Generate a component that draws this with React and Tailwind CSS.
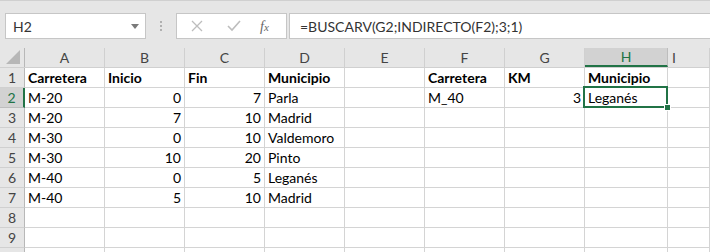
import React from "react";

const cols = ["A", "B", "C", "D", "E", "F", "G", "H", "I"];
const widths = ["w-[80px]", "w-[80px]", "w-[80px]", "w-[80px]", "w-[80px]", "w-[80px]", "w-[80px]", "w-[83px]", "flex-1"];

const data = [
    [{ t: "Carretera", b: true }, { t: "Inicio", b: true }, { t: "Fin", b: true }, { t: "Municipio", b: true }, null, { t: "Carretera", b: true }, { t: "KM", b: true }, { t: "Municipio", b: true }, null],
    [{ t: "M-20" }, { t: "0", r: true }, { t: "7", r: true }, { t: "Parla" }, null, { t: "M_40" }, { t: "3", r: true }, { t: "Leganés", sel: true }, null],
    [{ t: "M-20" }, { t: "7", r: true }, { t: "10", r: true }, { t: "Madrid" }],
    [{ t: "M-30" }, { t: "0", r: true }, { t: "10", r: true }, { t: "Valdemoro" }],
    [{ t: "M-30" }, { t: "10", r: true }, { t: "20", r: true }, { t: "Pinto" }],
    [{ t: "M-40" }, { t: "0", r: true }, { t: "5", r: true }, { t: "Leganés" }],
    [{ t: "M-40" }, { t: "5", r: true }, { t: "10", r: true }, { t: "Madrid" }],
    [],
    [],
    [],
];

function FormulaBar() {
    return (
        <div className="h-[48px] bg-[#e6e6e6] border-t border-[#d0d0d0] flex items-start pt-[12px]">
            <div className="ml-[5px] w-[141px] h-[26px] bg-white border border-[#c6c6c6] flex items-center justify-between pl-[7px] pr-[6px] text-[14px] text-[#333]">
                <span>H2</span>
                <svg width="8" height="5" viewBox="0 0 8 5"><path d="M0 0 L8 0 L4 5 Z" fill="#7a7a7a" /></svg>
            </div>
            <div className="w-[30px] h-[26px] flex flex-col items-center justify-center gap-[2px]">
                <div className="w-[2px] h-[2px] bg-[#b0b0b0]" />
                <div className="w-[2px] h-[2px] bg-[#b0b0b0]" />
                <div className="w-[2px] h-[2px] bg-[#b0b0b0]" />
            </div>
            <div className="w-[111px] h-[26px] bg-white border border-[#c6c6c6] flex items-center">
                <svg className="ml-[14px]" width="12" height="12" viewBox="0 0 12 12"><path d="M1 1 L11 11 M11 1 L1 11" stroke="#bdbdbd" strokeWidth="1.3" /></svg>
                <svg className="ml-[24px]" width="14" height="12" viewBox="0 0 14 12"><path d="M1 6 L5 10 L13 1" stroke="#bdbdbd" strokeWidth="1.6" fill="none" /></svg>
                <span className="ml-[19px] text-[14px] italic text-[#666]" style={{ fontFamily: '"Liberation Serif", serif' }}>f<span className="text-[11px]">x</span></span>
            </div>
            <div className="ml-[2px] flex-1 h-[26px] bg-white border border-[#c6c6c6] border-r-0 flex items-center pl-[10px] text-[14px] text-[#333]">
                =BUSCARV(G2;INDIRECTO(F2);3;1)
            </div>
        </div>
    );
}

function HeaderRow() {
    return (
        <div className="flex h-[20px] bg-[#e6e6e6] border-b border-[#d0d0d0]">
            <div className="w-[25px] shrink-0 border-r border-[#b8b8b8] relative">
                <svg className="absolute right-[4px] bottom-[3px]" width="14" height="14" viewBox="0 0 14 14"><path d="M14 0 L14 14 L0 14 Z" fill="#b7b7b7" /></svg>
            </div>
            {cols.map((c, i) => (
                <div
                    key={c}
                    className={`${widths[i]} shrink-0 flex items-center justify-center text-[14px] ${c === "H" ? "bg-[#d2d2d2] text-[#217346] border-b-2 border-[#217346] border-r border-r-[#bdbdbd]" : "text-[#444] border-r border-[#d0d0d0]"} ${i === 8 ? "justify-start pl-[4px]" : ""}`}
                >
                    {c}
                </div>
            ))}
        </div>
    );
}

function Row({ n, cells }) {
    const selRow = n === 2;
    return (
        <div className="flex h-[20px]">
            <div className={`w-[25px] shrink-0 flex items-center justify-center text-[14px] border-b ${selRow ? "bg-[#d2d2d2] text-[#217346] border-r-2 border-r-[#217346] border-b-[#bdbdbd]" : "bg-[#e6e6e6] text-[#444] border-r border-r-[#b8b8b8] border-b-[#d0d0d0]"}`}>
                {n < 10 ? n : ""}
            </div>
            {cols.map((c, i) => {
                const cell = cells[i];
                return (
                    <div
                        key={c}
                        className={`${widths[i]} shrink-0 relative bg-white border-r border-b border-[#d4d4d4] flex items-center px-[3px] text-[14px] text-black whitespace-nowrap ${cell && cell.r ? "justify-end" : ""} ${cell && cell.b ? "font-bold" : ""} ${cell && cell.sel ? "z-10" : ""}`}
                    >
                        {cell ? cell.t : ""}
                        {cell && cell.sel && (
                            <>
                                <div className="absolute left-[-2px] top-[-2px] right-[-1px] bottom-[-1px] border-2 border-[#217346]" />
                                <div className="absolute right-[-4px] bottom-[-4px] w-[5px] h-[5px] bg-[#217346] border border-white box-content" />
                            </>
                        )}
                    </div>
                );
            })}
        </div>
    );
}

export default function App() {
    return (
        <div className="w-[710px] h-[252px] overflow-hidden bg-white" style={{ fontFamily: 'Lato, "Liberation Sans", sans-serif' }}>
            <FormulaBar />
            <HeaderRow />
            {data.map((cells, i) => (
                <Row key={i} n={i + 1} cells={cells} />
            ))}
        </div>
    );
}
